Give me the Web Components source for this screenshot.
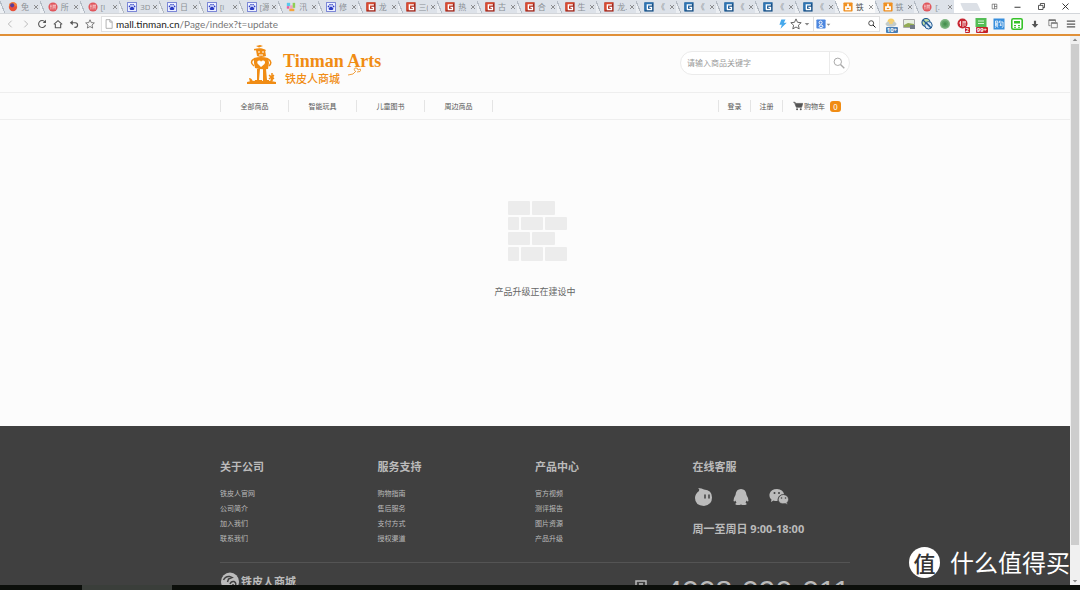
<!DOCTYPE html>
<html lang="zh-CN">
<head>
<meta charset="utf-8">
<title>铁皮人商城</title>
<style>
html,body{margin:0;height:100%;overflow:hidden}
body{font-family:"Open Sans","Noto Sans CJK SC",sans-serif;background:#fcfcfc;color:#666}
</style>
</head>
<body>
<app-window></app-window>
<script>
const ICONS={
firefox:'<circle cx="6" cy="6" r="5" fill="#e8503a"/><path d="M1 5a5 5 0 0 1 10 0z" fill="#f47b3a"/><circle cx="5" cy="4" r="2.5" fill="#5a3a9a"/>',
red:'<circle cx="6" cy="6" r="5.5" fill="#e0565c"/><path d="M3.5 3v6M2.5 5h2M6 3v6M6 4h3.500M6 6h3M8.500 3v6" stroke="#fbe4e4" stroke-width=".8" fill="none"/>',
baidu:'<path d="M.5.5h11v11H.5z" fill="#eef2ff" stroke="#5a68cc"/><path d="M6 5.500q1.500 0 2.500 2 .8 2-1 2.200H4.500Q2.700 9.500 3.500 7.500q1-2 2.500-2z" fill="#2c3cc4"/><circle cx="3" cy="5.300" r="1" fill="#2c3cc4"/><circle cx="4.800" cy="3.300" r="1" fill="#2c3cc4"/><circle cx="7.300" cy="3.300" r="1" fill="#2c3cc4"/><circle cx="9.100" cy="5.300" r="1" fill="#2c3cc4"/>',
color:'<path d="M1 1h4v4H1z" fill="#59c9ee"/><path d="M5 4h3v4H5z" fill="#f59cc4"/><path d="M8 1h3v6H8z" fill="#8fce55"/><path d="M4 8h6v3H4z" fill="#f4a53c"/><path d="M1 5h3v3H1z" fill="#e85e9c"/>',
gr:'<rect x=".5" y=".5" width="11" height="11" fill="#a3261a"/><path d="M.5.500h11L.5 11z" fill="#d84a30"/><path d="M9.500 3.500H4v5.500h5V6.500H6.500" stroke="#fff" stroke-width="1.600" fill="none"/>',
gb:'<rect x=".5" y=".5" width="11" height="11" fill="#164f86"/><path d="M.5.500h11L.5 11z" fill="#2d74b3"/><path d="M9.500 3.500H4v5.500h5V6.500H6.500" stroke="#fff" stroke-width="1.600" fill="none"/>',
tin:'<rect x=".5" y=".5" width="11" height="11" rx="1" fill="#f09020"/><path d="M2.500 5h7v5h-7zM5 2h2v3H5z" fill="#fff"/><path d="M4.500 7h3v1.500h-3z" fill="#f09020"/>',
close:'<path d="M2 2l8 8M10 2l-8 8" stroke="#777" stroke-width="1.600"/>',
back:'<path d="M8 2L4 6l4 4" stroke="#bbb" stroke-width="1.200" fill="none"/>',
fwd:'<path d="M4 2l4 4-4 4" stroke="#bbb" stroke-width="1.200" fill="none"/>',
reload:'<path d="M9.500 3.500A4.200 4.200 0 1 0 10.200 7" stroke="#555" stroke-width="1.300" fill="none"/><path d="M10.800.800v4H6.800z" fill="#555"/>',
home:'<path d="M1 6.500L6 2l5 4.500M2.800 6v4.500h6.400V6" stroke="#555" stroke-width="1.300" fill="none"/>',
undo:'<path d="M3.500 4.500h4a2.800 2.800 0 0 1 0 5.600h-1" stroke="#555" stroke-width="1.400" fill="none"/><path d="M4.500 1.500v6L1 4.500z" fill="#555"/>',
star:'<path d="M6 .9l1.500 3.400 3.700.4-2.800 2.500.8 3.700L6 9l-3.200 1.900.8-3.700L.8 4.700l3.700-.4z" fill="none" stroke="#666"/>',
file:'<path d="M2.500.8h4.800l2.500 2.500v7.900H2.500zM7 1v2.700h2.800" fill="#fff" stroke="#999" stroke-width=".9"/>',
bolt:'<path d="M4 .5h5L7 4.500h3.500L3 11.800l1.600-5H1.700z" fill="#45a8ec"/>',
caret:'<path d="M1.500 4h9L6 9z" fill="#888"/>',
google:'<rect x=".5" y=".5" width="11" height="11" rx="1" fill="#4b86df"/><circle cx="5.500" cy="4.300" r="1.800" stroke="#fff" stroke-width="1.200" fill="none"/><ellipse cx="6" cy="8.700" rx="2.300" ry="1.500" stroke="#fff" stroke-width="1.200" fill="none"/>',
mag:'<circle cx="4.800" cy="4.800" r="3.700" stroke="currentColor" fill="none"/><path d="M7.500 7.500L11.300 11.300" stroke="currentColor" stroke-width="1.400"/>',
weather:'<circle cx="6" cy="4" r="3.500" fill="#f7cf62"/><ellipse cx="6" cy="6" rx="5.500" ry="2.800" fill="#c3ccca"/><circle cx="6" cy="4" r="2.200" fill="#f2cf7a"/>',
pic:'<path d="M.5 1.500h11v8H.5z" fill="#e8efe2" stroke="#aaa"/><path d="M1 7l4-2 6 1v3H1z" fill="#92ab54"/><path d="M7 7h5v4H7z" fill="#727b86"/>',
globe:'<circle cx="5" cy="4.500" r="4" fill="#c4e0a0" stroke="#215a93" stroke-width="1.200"/><circle cx="7.500" cy="7.300" r="3.700" fill="#dcebf6" stroke="#215a93"/><path d="M2 2l8 8M5.500 5l4 4" stroke="#215a93" stroke-width="1.200"/>',
dot:'<circle cx="6" cy="6" r="5" fill="#7fb783"/><circle cx="6" cy="6" r="3.500" fill="#5fa367"/><circle cx="6" cy="6" r="1.700" fill="#47914f"/>',
jd:'<circle cx="5.500" cy="5.500" r="5" fill="#c72632"/><path d="M3.500 3v5M6 3v6M8 3v5M2 5h2M6 4h3" stroke="#fff" stroke-width=".8" fill="none"/>',
greenbox:'<path d="M.5 0h11v9H.5z" fill="#53bd55"/><path d="M3 3h6M3 5.500h6" stroke="#d9f4d9"/>',
blue:'<path d="M.5.500h11v11H.500z" fill="#368edd"/><path d="M2.500 8V3h2.200v5M3.600 4.500v3L2.200 9.800M4 8l1 1.600M7 2.500L6 5M6.700 4H10v4.500q0 1-1.200 1M8 5l-1 2.500 2-.5" stroke="#fff" stroke-width=".8" fill="none"/>',
calc:'<rect x=".8" y=".8" width="10.400" height="10.400" rx="1.500" fill="#fff" stroke="#36c229" stroke-width="1.600"/><path d="M3 3h6v2.500H3z" fill="#36c229"/><path d="M3 7.500h2M7 7.500h2M3 9.300h2M7 9.300h2" stroke="#36c229"/>',
down:'<path d="M4.700 2h2.600v4H10l-4 4.500L2 6h2.700z" fill="#555"/>',
wins:'<path d="M1 1h8v2.500M1 1v7h2M4 4.500h7.200v6H4z" stroke="#777" fill="none"/><path d="M1 1.500h8M4 5h7" stroke="#777" stroke-width="1.600"/>',
menu:'<path d="M1 2.500h10M1 6h10M1 9.500h10" stroke="#555" stroke-width="1.500"/>',
min:'<path d="M2 7h8" stroke="#222" stroke-width="1.200"/>',
max:'<path d="M2 4.500h6V10H2zM4.500 4V2H10v5.500H8" stroke="#222" fill="none"/>',
ext:'<path d="M2 2h8v8H2zM6 2v8M6 6h4" stroke="#444" fill="none"/>',
x:'<path d="M2 2l8 8M10 2l-8 8" stroke="#222" stroke-width="1.200"/>',
cart:'<path d="M.3 1.500h2.200l.6 1.400h8.600l-1.400 4.700H4L2 2.500" fill="#555" stroke="#555" stroke-width=".8"/><circle cx="4.900" cy="10" r="1.200" fill="#555"/><circle cx="9.300" cy="10" r="1.200" fill="#555"/>',
};
class UiIcon extends HTMLElement{
 constructor(){super();this.attachShadow({mode:'open'})}
 connectedCallback(){
  this.shadowRoot.innerHTML='<style>:host{display:block;flex:none;width:10px;height:10px;box-sizing:border-box}svg{display:block;width:100%;height:100%}</style><svg viewBox="0 0 12 12" aria-hidden="true">'+ICONS[this.getAttribute('name')]+'</svg>';
 }
}
customElements.define('ui-icon',UiIcon);

function define(name,html){
 const t=document.createElement('template');t.innerHTML=html;
 customElements.define(name,class extends HTMLElement{
  constructor(){super();this.attachShadow({mode:'open'}).append(t.content.cloneNode(true))}
 });
}

define('browser-tab',`<style>
:host{display:flex;flex:1 1 0;min-width:0;align-items:center;gap:2px;height:13px;padding:0 1px 0 8px;box-sizing:border-box;font-size:8px;line-height:13px;color:#8b9095;background:linear-gradient(68deg,transparent 4px,#b4bbc4 4px,#b4bbc4 5px,#dde2e9 5px)}
:host([active]){background:linear-gradient(68deg,transparent 4px,#b4bbc4 4px,#b4bbc4 5px,#fafafa 5px);color:#555}
span{flex:1;min-width:0;overflow:hidden;white-space:nowrap;padding-left:1px}
ui-icon{width:6px;height:6px}
::slotted(ui-icon){width:10px;height:10px}
button{flex:none;padding:0;border:0;background:none}
</style><slot name="icon"></slot><span><slot></slot></span><button aria-label="关闭标签页"><ui-icon name="close"></ui-icon></button>`);

const tabs=[['firefox','免'],['red','所'],['red','[I'],['baidu','3D'],['baidu','日'],['baidu','[i'],['baidu','[源'],['color','汛'],['baidu','修'],['gr','龙'],['gr','三('],['gr','热'],['gr','古'],['gr','合'],['gr','生'],['gr','龙.'],['gb','《'],['gb','《'],['gb','《'],['gb','《'],['gb','《'],['tin','铁','active'],['tin','铁'],['red','[.']];
define('browser-tabs',`<style>
:host{display:flex;height:13px;background:#fff;flex:none}
.tabs{display:flex;flex:1;min-width:0;background:#eceff3}
.new{width:17px;height:8px;background:#dce0e6;transform:skewX(25deg);margin:3px 0 0 8px;border-radius:1px}
.win{display:flex;align-items:center;gap:15px;width:89px;margin-left:12px}
button{padding:0;border:0;background:none}
.win ui-icon{width:9px;height:9px}
.win button:first-child ui-icon{width:7px;height:7px}
</style><div class="tabs">${tabs.map(t=>`<browser-tab ${t[2]||''}><ui-icon slot="icon" name="${t[0]}"></ui-icon>${t[1]}</browser-tab>`).join('')}</div><div class="new"></div>
<div class="win"><button aria-label="扩展"><ui-icon name="ext"></ui-icon></button><button aria-label="最小化"><ui-icon name="min"></ui-icon></button><button aria-label="还原"><ui-icon name="max"></ui-icon></button><button aria-label="关闭"><ui-icon name="x"></ui-icon></button></div>`);

define('ext-button',`<style>
:host{display:block;position:relative;flex:none;width:12px;height:12px}
button{display:block;padding:0;border:0;background:none}
::slotted(ui-icon){width:12px;height:12px}
span{position:absolute;right:-1px;bottom:-3px;border-radius:1px;background:var(--badge,#c33);color:#fff;font:bold 6px/6px "Open Sans",sans-serif;padding:0 1px}
</style><button aria-label="扩展程序"><slot name="icon"></slot></button><span><slot></slot></span>`);
const ext=[['weather','10+','#4a7fb5'],['pic'],['globe'],['dot'],['jd','2'],['greenbox','99+'],['blue'],['calc'],['down'],['wins'],['menu']];
define('browser-toolbar',`<style>
:host{display:flex;align-items:center;flex:none;height:21px;box-sizing:border-box;background:#f8f8f8;border-top:1px solid #d3d6da;padding:0 3px 0 5px}
nav{display:flex;gap:6px;margin-right:6px}
button{padding:0;border:0;background:none;display:block}
.url{display:flex;align-items:center;gap:2px;flex:1;height:16px;box-sizing:border-box;border:1px solid #e0e0e0;background:#fff;padding:0 3px 0 2px}
.addr{flex:1;font:10px/14px Lato,sans-serif;color:#777;outline:0;white-space:nowrap}
.addr b{font-weight:400;color:#222}
.search{display:flex;align-items:center;width:66px;height:16px;box-sizing:border-box;border:1px solid #e0e0e0;border-left:0;background:#fff;padding:0 3px 0 2px;color:#666}
.search input{flex:1;min-width:0;width:0;border:0;padding:0;height:12px;font-size:8px;outline:0}
.caret{width:5px;height:5px}
.mag ui-icon{width:8px;height:8px}
.ext{display:flex;gap:6px;margin-left:5px}
.ext ui-icon{width:12px;height:12px}
</style><nav>${['back','fwd','reload','home','undo','star'].map(n=>`<button aria-label="${n}"><ui-icon name="${n}"></ui-icon></button>`).join('')}</nav>
<div class="url"><ui-icon name="file"></ui-icon><div class="addr" role="textbox" aria-label="地址" contenteditable="true" spellcheck="false"><b>mall.tinman.cn</b>/Page/index?t=update</div><ui-icon name="bolt"></ui-icon><ui-icon name="star" style="width:12px;height:12px"></ui-icon><ui-icon name="caret" style="width:6px"></ui-icon></div>
<div class="search"><ui-icon name="google"></ui-icon><ui-icon class="caret" name="caret"></ui-icon><input aria-label="搜索"><button class="mag" aria-label="搜索"><ui-icon name="mag"></ui-icon></button></div>
<div class="ext">${ext.map(e=>e[1]?`<ext-button style="--badge:${e[2]||'#c4202a'}"><ui-icon slot="icon" name="${e[0]}"></ui-icon>${e[1]}</ext-button>`:`<button aria-label="${e[0]}"><ui-icon name="${e[0]}" ${'down wins menu'.includes(e[0])?'style="padding:1px"':''}></ui-icon></button>`).join('')}</div>`);

define('shop-logo',`<style>
:host{display:block}
a{display:flex;gap:7px;color:#f08c14;text-decoration:none}
svg{display:block;width:29px;height:40px}
.t{position:relative;padding-top:6px}
b{display:block;font:bold 18px/20px "Liberation Serif",serif}
span{display:block;font:500 11px/14px "Noto Sans CJK SC",sans-serif;padding:0 2px}
.bird{position:absolute;left:65px;top:22px;width:13px;height:9px}
</style><a href="#"><svg viewBox="0 0 29 40"><g fill="#f08c14"><path d="M0 37q6-2 14-1 8-1 15 1v2H0z"/><path d="M7 13q7-2 14 0l1 5-1 6q-7 1-13-1l-1-5z"/><path d="M9 5q5-3 9 0l1 6q-5 2-9 0z"/><path d="M7 4q7-2 12 1l-1 1.500Q13 4 7 5.500zM9 1l4-1 3 1-4 1.500z"/><path d="M10 24h3l-1 11h3v2H8v-2h2zM16 24h3l1 11h2v2h-6z"/><path d="M2 33q3 0 4 4H3zM27 31q-1 5-4 6l1-4-2-2 3 1z"/></g><path d="M7 14q-5 3 0 7M21 14q5 3 1 7M25 28v8M22 30l5 4M27 30l-5 4" stroke="#f08c14" stroke-width="1.500" fill="none"/><path d="M14 22l-3.500-3.500q-1-3 2-3 1 0 1.500 1.200 1-1.700 2.500-1.200 2.500 1 1 3.500z" fill="#fff"/><path d="M11 7h2M15 7h2M12 10h4" stroke="#fff"/></svg>
<div class="t"><b>Tinman Arts</b><span>铁皮人商城</span><svg class="bird" viewBox="0 0 13 9"><path d="M0 8q6 0 8-4M7 4q-2-3 1-3 2 0 2 2 3-2 3 0 0 2-4 2" stroke="#f0a040" fill="none"/></svg></div></a>`);

define('shop-search',`<style>
:host{display:block}
form{display:flex;width:170px;height:24px;box-sizing:border-box;border:1px solid #ebebeb;border-radius:12px;background:#fff;overflow:hidden;margin:0}
input{flex:1;min-width:0;border:0;background:none;outline:0;padding:0 6px;font:8px/20px "Noto Sans CJK SC",sans-serif;color:#666}
input::placeholder{color:#999;opacity:1}
button{width:20px;border:0;border-left:1px solid #ebebeb;background:none;padding:0 0 0 3px;color:#aaa}
ui-icon{width:12px;height:12px}
</style><form role="search"><input type="text" aria-label="搜索商品" placeholder="请输入商品关键字"><button type="button" aria-label="搜索"><ui-icon name="mag"></ui-icon></button></form>`);

define('shop-nav',`<style>
:host{display:block;border-top:1px solid #eee;border-bottom:1px solid #eee}
.in{display:flex;justify-content:space-between;align-items:center;max-width:630px;height:26px;margin:0 auto;font:7px/12px "Noto Sans CJK SC",sans-serif}
nav,.user{display:flex;align-items:center}
a{color:#555;text-decoration:none;box-sizing:border-box;border-left:1px solid #e4e4e4;text-align:center}
nav{border-right:1px solid #e4e4e4}
nav a{width:68px}
.user a{width:32px}
.user .cart{width:auto;display:flex;align-items:center;gap:1px;padding:0 9px 0 10px}
i{font-style:normal;background:#f08c14;color:#fff;border-radius:3px;width:11px;line-height:11px;margin-left:4px;font-size:8px}
</style><div class="in"><nav><a href="#">全部商品</a><a href="#">智能玩具</a><a href="#">儿童图书</a><a href="#">周边商品</a></nav>
<div class="user"><a href="#">登录</a><a href="#">注册</a><a class="cart" href="#"><ui-icon name="cart"></ui-icon>购物车<i>0</i></a></div></div>`);

define('shop-header',`<style>
:host{display:block}
.in{display:flex;justify-content:space-between;align-items:flex-start;max-width:630px;height:56px;margin:0 auto;box-sizing:border-box;padding:9px 0 0 27px}
shop-search{margin-top:6px}
</style><div class="in"><shop-logo></shop-logo><shop-search></shop-search></div><shop-nav></shop-nav>`);

define('build-notice',`<style>
:host{display:flex;flex-direction:column;align-items:center;padding:81px 0 125px}
svg{display:block;width:60px;height:62px;padding-left:6px}
p{margin:20px 0 0;font:9px/18px "Noto Sans CJK SC",sans-serif;color:#666}
</style><svg viewBox="0 0 60 62"><g fill="#ececec">
<rect x="0" y="0" width="22" height="14" rx="1"/><rect x="24" y="0" width="23" height="14" rx="1"/>
<rect x="0" y="16" width="11" height="13" rx="1"/><rect x="13" y="16" width="22" height="13" rx="1"/><rect x="37" y="16" width="22" height="13" rx="1"/>
<rect x="0" y="31" width="22" height="13" rx="1"/><rect x="24" y="31" width="23" height="13" rx="1"/>
<rect x="0" y="46" width="11" height="14" rx="1"/><rect x="13" y="46" width="22" height="14" rx="1"/><rect x="37" y="46" width="22" height="14" rx="1"/></g></svg><p>产品升级正在建设中</p>`);

define('footer-column',`<style>
:host{display:block}
h3{margin:0;font-weight:700;font-size:11px;line-height:16px;color:#bbb}
</style><h3><slot name="title"></slot></h3><slot></slot>`);

const cols=[['关于公司','铁皮人官网','公司简介','加入我们','联系我们'],['服务支持','购物指南','售后服务','支付方式','授权渠道'],['产品中心','官方视频','测评报告','图片资源','产品升级']];
define('shop-footer',`<style>
:host{display:block;flex:none;background:#404040;color:#bbb;padding-top:33px}
.in{max-width:630px;margin:0 auto}
.cols{display:grid;grid-template-columns:repeat(4,1fr);padding-bottom:16px;border-bottom:1px solid #545454}
ul{list-style:none;margin:11px 0 0;padding:0;font:7px/15px "Noto Sans CJK SC",sans-serif}
a{color:#bbb;text-decoration:none}
.chat{display:flex;gap:18px;margin:13px 0 15px}
.chat svg{display:block;width:20px;height:18px}
p{margin:0;font-weight:700;font-size:11px;line-height:16px}
.bottom{display:flex;justify-content:space-between;height:50px;padding-top:9px;box-sizing:border-box}
.mark{display:flex;gap:2px;height:18px;font:bold 11px/18px "Noto Sans CJK SC",sans-serif}
.mark svg{width:19px;height:19px}
.tel{display:flex;gap:18px;font:30px/32px "Liberation Sans",sans-serif;padding-top:3px}
.tel svg{width:12px;height:20px;margin-top:5px}
</style><div class="in"><div class="cols">
${cols.map(c=>`<footer-column><span slot="title">${c[0]}</span><ul>${c.slice(1).map(l=>`<li><a href="#">${l}</a></li>`).join('')}</ul></footer-column>`).join('')}
<footer-column><span slot="title">在线客服</span><div class="chat">
<a href="#" aria-label="旺旺"><svg viewBox="0 0 20 18"><path d="M6 3Q7 1 5 0q4 0 6 1.500 8 .5 8 8T11 18Q2 17.500 2 10q0-4 4-7z" fill="#bbb"/><path d="M12 7v3M16 7v3" stroke="#404040" stroke-width="1.500" stroke-linecap="round"/></svg></a>
<a href="#" aria-label="QQ"><svg viewBox="0 0 20 18"><path d="M10 1q5 0 5.500 6 2 3 2 6-1 1-2-.5-.5 1.500-1 2 1.500 1 1 2-3 1-5.500 0-3 1-5.500 0-.5-1 1-2-.7-.7-1-2-1 1.500-2 .5 0-3 2-6Q5 1 10 1z" fill="#bbb"/></svg></a>
<a href="#" aria-label="微信"><svg viewBox="0 0 20 18"><path d="M8 1q6 .5 7 5-7 1-6.500 7-2 .3-4-.5L2 14l.5-2.500Q0 9.500.5 6 2 1 8 1z" fill="#bbb"/><path d="M14.500 6.500q5 1 5 5 0 2-1.500 3l.5 2-2.300-1q-6 1-7-3.500.3-5 5.300-5.500z" fill="#bbb" stroke="#404040" stroke-width=".6"/><g fill="#404040"><circle cx="5.500" cy="5" r="1"/><circle cx="10" cy="5" r="1"/><circle cx="12.500" cy="10" r=".8"/><circle cx="16.500" cy="10" r=".8"/></g></svg></a></div>
<p>周一至周日 9:00-18:00</p></footer-column></div>
<div class="bottom"><div class="mark"><svg viewBox="0 0 19 19"><circle cx="10" cy="9.500" r="9" fill="#bbb"/><path d="M3.500 8q2-4 6-3.500l2.500 1-3.500 1.500-1 3M10 12q1-3 4-2.500 2.500 1 1.500 4M12 13h2" stroke="#404040" stroke-width="1.500" fill="none"/></svg>铁皮人商城</div>
<div class="tel"><svg viewBox="0 0 12 20"><path d="M1 1h10v18H1zM4 4h4" fill="none" stroke="#bbb" stroke-width="1.500"/></svg><span>4008-090-011</span></div></div></div>`);

define('scroll-track',`<style>
:host{display:flex;flex-direction:column;align-items:center;justify-content:space-between;flex:none;width:10px;background:#f0f0f0}
i{width:8px;flex:1;background:#cdcdcd;margin-bottom:32px}
ui-icon{width:6px;height:8px}
.up{transform:rotate(180deg)}
</style><ui-icon class="up" name="caret"></ui-icon><i></i><ui-icon name="caret"></ui-icon>`);

define('site-watermark',`<style>
:host{position:absolute;right:10px;bottom:11px;display:flex;align-items:center;gap:10px;color:#fff;font:24px/34px "Noto Sans CJK SC",sans-serif;white-space:nowrap}
b{width:31px;height:31px;border-radius:50%;background:#fff;color:#333;font-size:22px;line-height:30px;font-weight:500;text-align:center}
</style><b>值</b><span>什么值得买</span>`);

define('task-bar',`<style>
:host{display:flex;height:5px;flex:none;background:#0c0f0b}
i{width:90px;margin-left:82px;background:#3a3e3a}
</style><i></i>`);

define('app-window',`<style>
:host{display:flex;flex-direction:column;height:100vh;position:relative}
.line{height:2px;flex:none;background:#e09038}
.body{display:flex;flex:1;min-height:0}
main{flex:1;min-width:0;overflow:hidden;background:#fcfcfc}
</style><browser-tabs></browser-tabs><browser-toolbar></browser-toolbar><div class="line"></div>
<div class="body"><main><shop-header></shop-header><build-notice></build-notice><shop-footer></shop-footer></main><scroll-track></scroll-track></div>
<task-bar></task-bar><site-watermark></site-watermark>`);
</script>
</body>
</html>
